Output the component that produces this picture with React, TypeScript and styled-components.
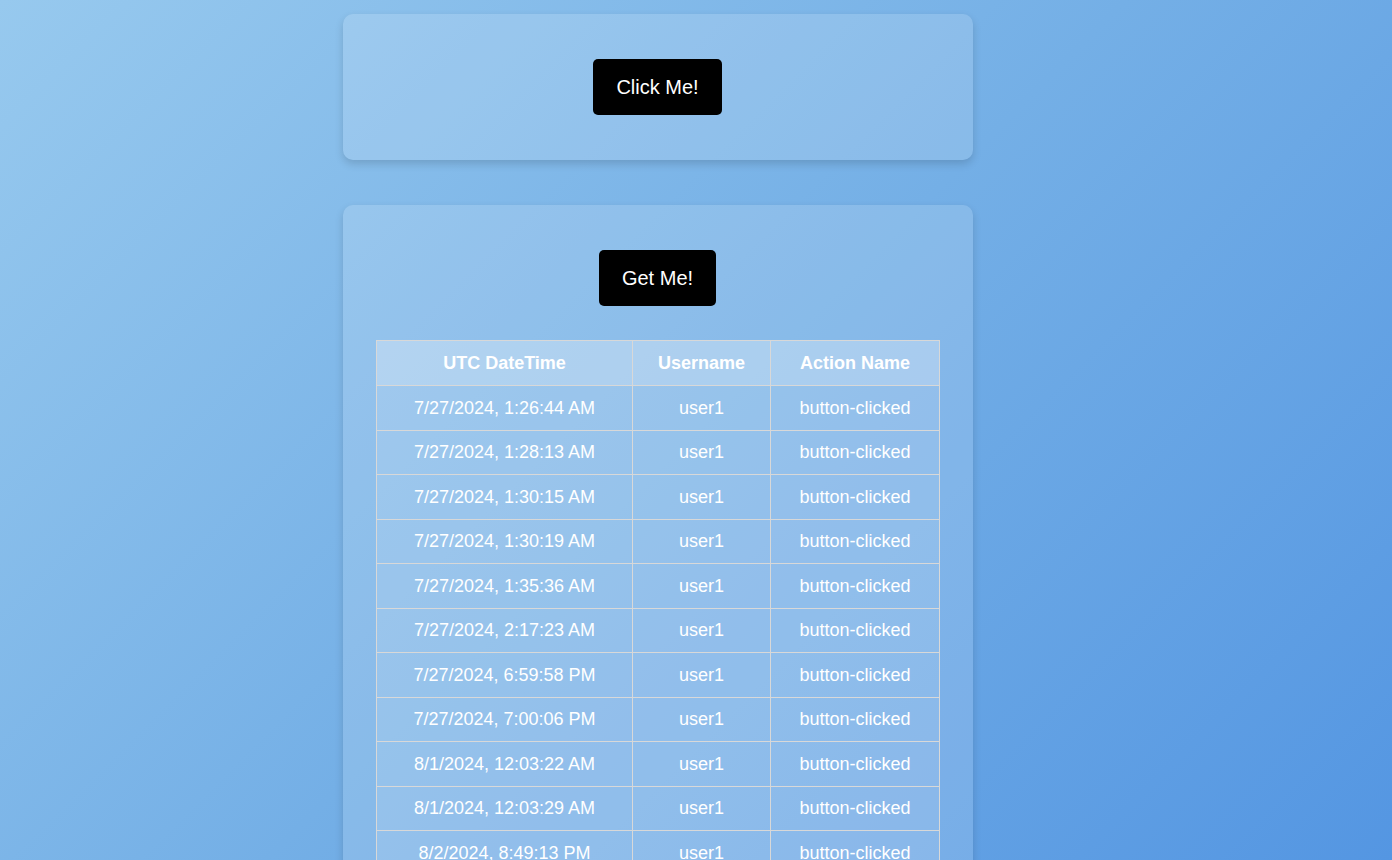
import React from "react";
import styled, { createGlobalStyle } from "styled-components";

const Global = createGlobalStyle`
  html, body { margin: 0; padding: 0; }
  body {
    font-family: "Liberation Sans", Arial, sans-serif;
    background: linear-gradient(135deg, #97c9ee 0%, #74afe6 50%, #5496e2 100%);
    background-attachment: fixed;
    min-height: 100vh;
    color: #fff;
  }
`;

const Page = styled.main`
  display: flex;
  flex-direction: column;
  align-items: center;
  gap: 45px;
  padding: 14px 76px 40px 0;
`;

const Card = styled.section`
  width: 630px;
  box-sizing: border-box;
  padding: 45px 33px;
  border-radius: 10px;
  background: rgba(255, 255, 255, 0.15);
  box-shadow: 0 4px 8px rgba(0, 0, 0, 0.15);
  display: flex;
  flex-direction: column;
  align-items: center;
  gap: 34px;
`;

const Button = styled.button<{ $w: number }>`
  width: ${(p) => p.$w}px;
  height: 56px;
  margin-right: 1px;
  background: #000;
  color: #fff;
  border: none;
  border-radius: 5px;
  font-family: "Liberation Sans", Arial, sans-serif;
  font-size: 20px;
  cursor: pointer;
`;

const Table = styled.table`
  width: 560px;
  border-collapse: collapse;
  background: rgba(255, 255, 255, 0.12);
  font-size: 18px;
  table-layout: fixed;
`;

const Th = styled.th<{ $w: number }>`
  width: ${(p) => p.$w}px;
  height: 44px;
  padding: 0;
  border: 1px solid #d8d8d8;
  background: rgba(255, 255, 255, 0.2);
  font-weight: bold;
  text-align: center;
  color: #fff;
`;

const Td = styled.td`
  height: 42.5px;
  padding: 1px 0 0 0;
  border: 1px solid #d8d8d8;
  text-align: center;
  color: #fff;
`;

const rows = [
  "7/27/2024, 1:26:44 AM",
  "7/27/2024, 1:28:13 AM",
  "7/27/2024, 1:30:15 AM",
  "7/27/2024, 1:30:19 AM",
  "7/27/2024, 1:35:36 AM",
  "7/27/2024, 2:17:23 AM",
  "7/27/2024, 6:59:58 PM",
  "7/27/2024, 7:00:06 PM",
  "8/1/2024, 12:03:22 AM",
  "8/1/2024, 12:03:29 AM",
  "8/2/2024, 8:49:13 PM",
  "8/2/2024, 8:49:20 PM",
];

export default function App() {
  return (
    <>
      <Global />
      <Page>
        <Card>
          <Button $w={129}>Click Me!</Button>
        </Card>
        <Card>
          <Button $w={117}>Get Me!</Button>
          <Table>
            <thead>
              <tr>
                <Th $w={255}>UTC DateTime</Th>
                <Th $w={137}>Username</Th>
                <Th $w={168}>Action Name</Th>
              </tr>
            </thead>
            <tbody>
              {rows.map((r) => (
                <tr key={r}>
                  <Td>{r}</Td>
                  <Td>user1</Td>
                  <Td>button-clicked</Td>
                </tr>
              ))}
            </tbody>
          </Table>
        </Card>
      </Page>
    </>
  );
}
